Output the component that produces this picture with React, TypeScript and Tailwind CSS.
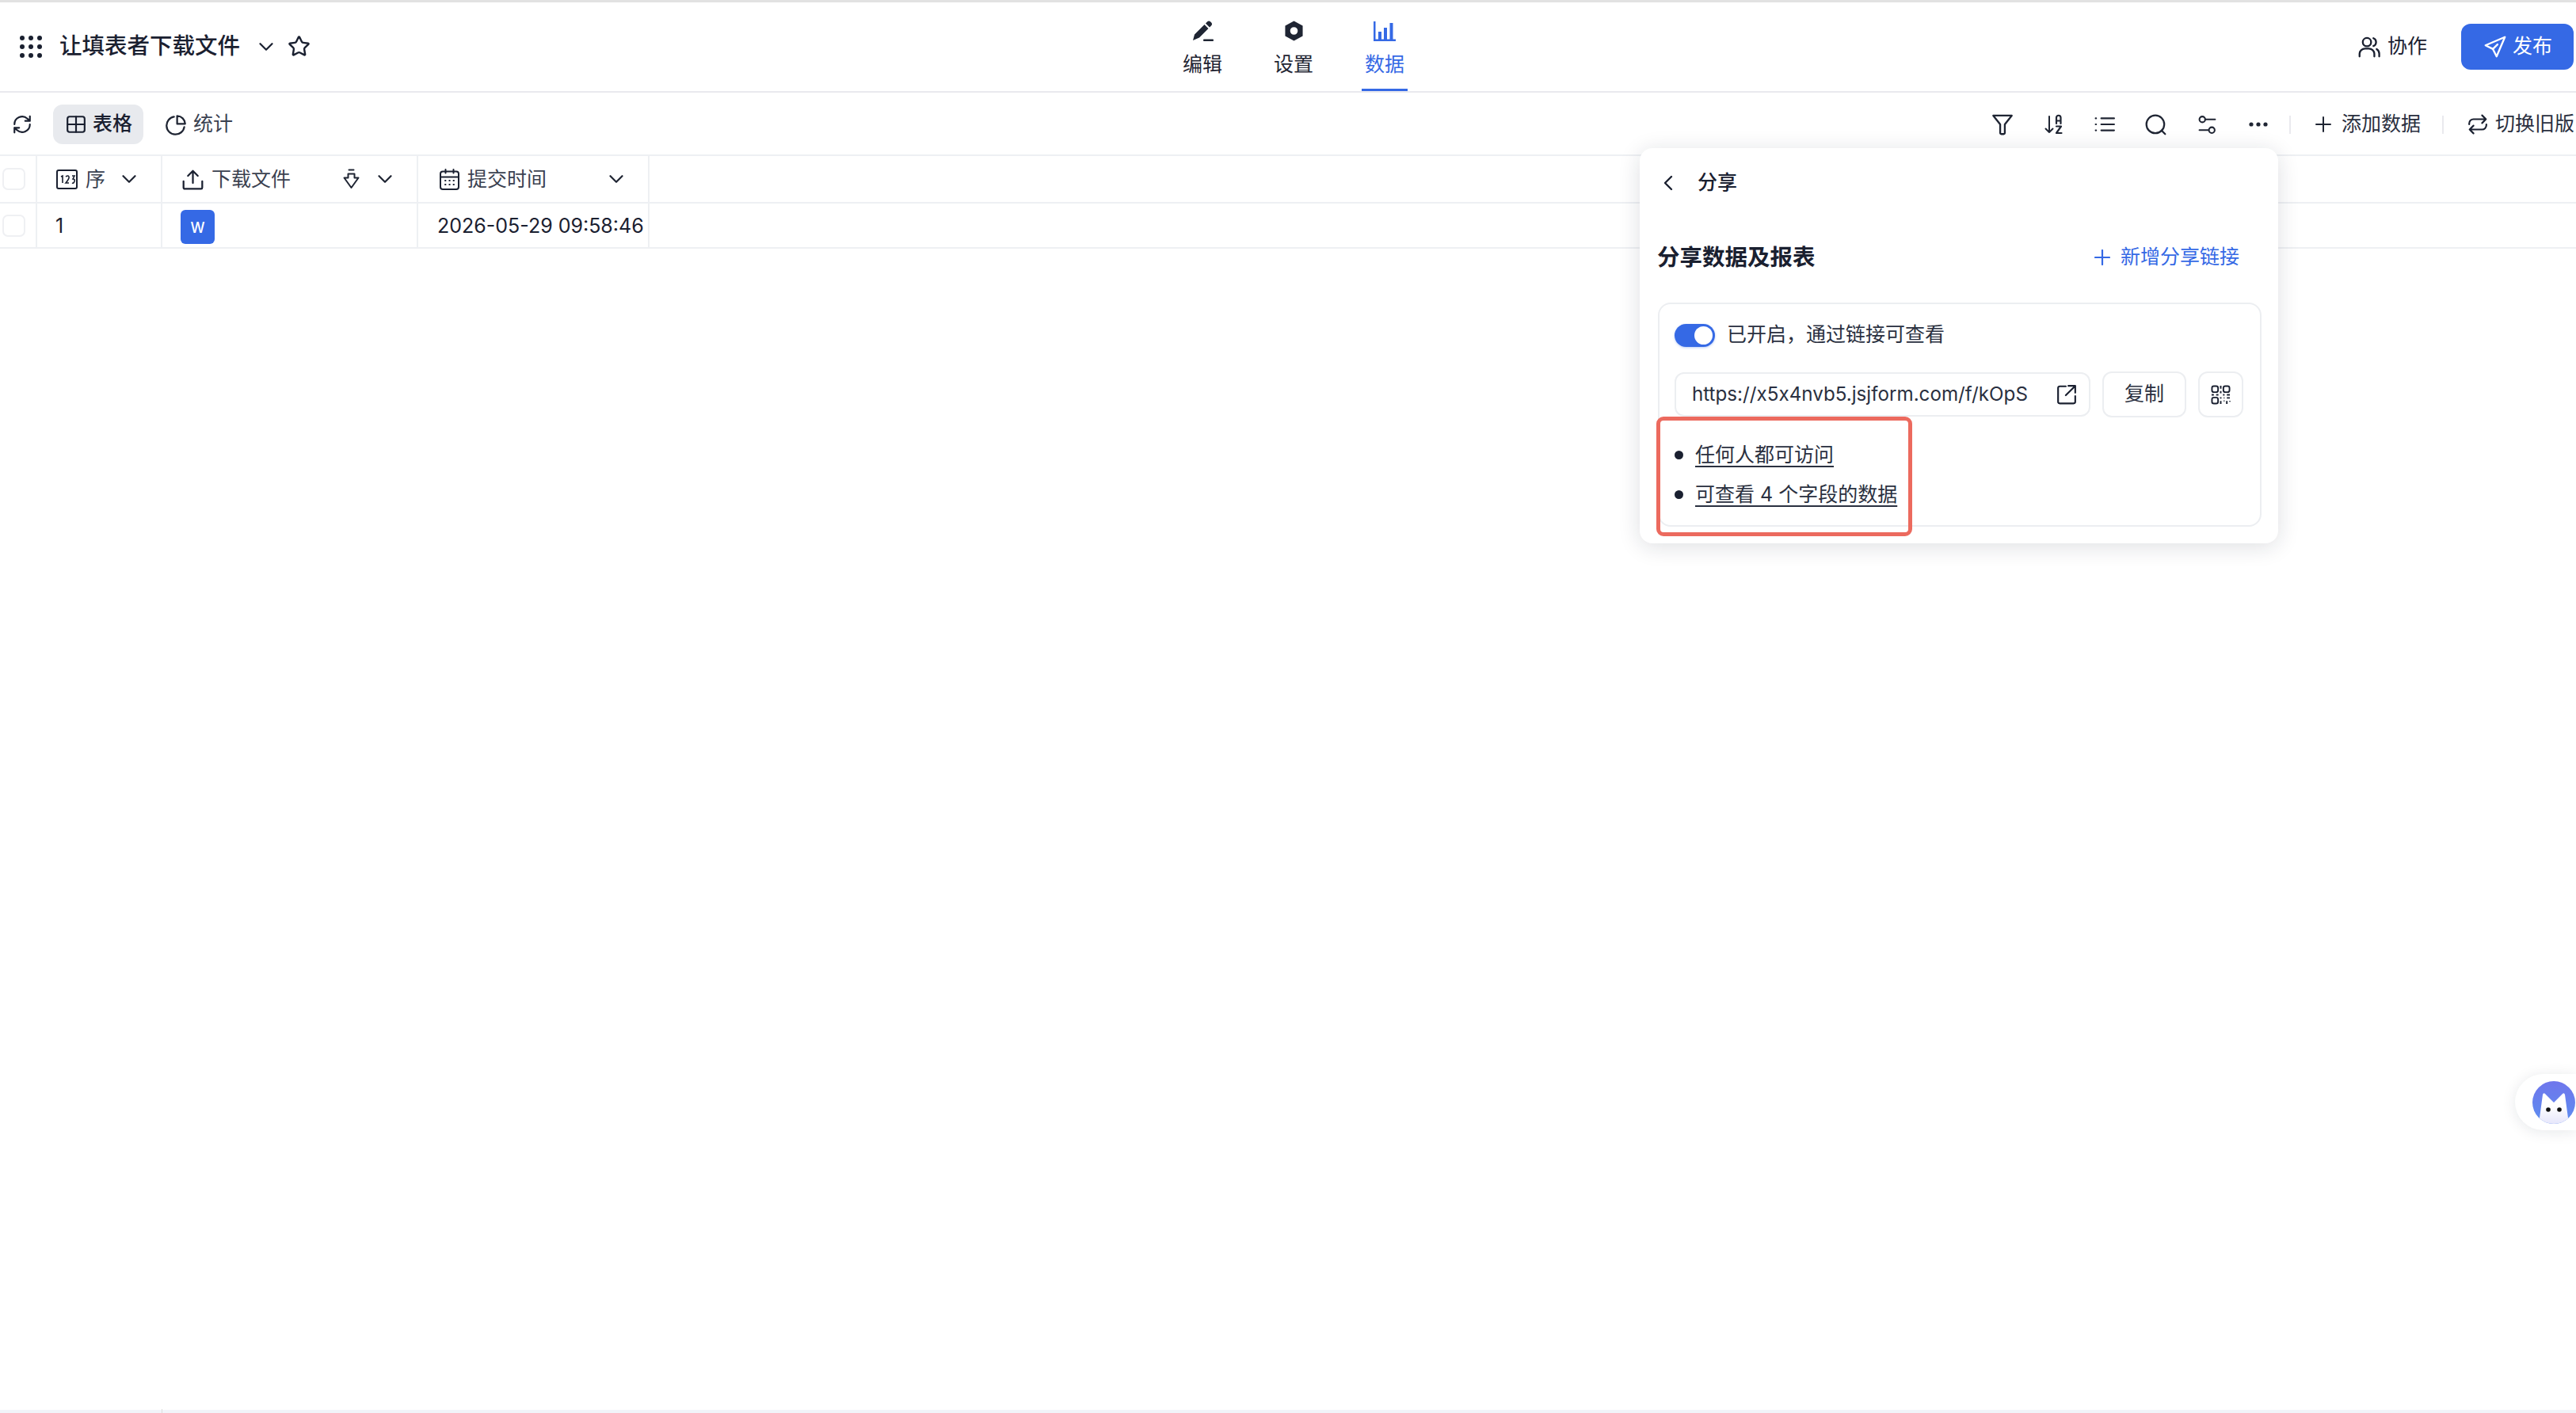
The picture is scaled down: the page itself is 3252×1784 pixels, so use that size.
import React from 'react'
import { Star } from 'lucide-react'

const stroke = { fill: 'none', stroke: 'currentColor', strokeWidth: 2, strokeLinecap: 'round', strokeLinejoin: 'round' } as const

const Ico = ({ className, children }: { className: string; children: React.ReactNode }) => (
  <svg viewBox="0 0 24 24" className={`shrink-0 ${className}`} {...stroke}>
    {children}
  </svg>
)

// 18px wide chevron, wider than the lucide one
const Chevron = ({ className }: { className: string }) => (
  <svg viewBox="0 0 18 10" className={`w-[18px] h-[10px] shrink-0 ${className}`} fill="none" stroke="currentColor" strokeWidth="2.200" strokeLinecap="round" strokeLinejoin="round">
    <path d="M1.500 1.200L9 8.800l7.500-7.600" />
  </svg>
)

const GridDots = () => (
  <svg viewBox="0 0 28 28" className="w-[28px] h-[28px] shrink-0" fill="currentColor">
    {[3, 14, 25].map((y) => [3, 14, 25].map((x) => <circle key={`${x}-${y}`} cx={x} cy={y} r="3" />))}
  </svg>
)

const NavItem = ({ label, active, icon }: { label: string; active?: boolean; icon: React.ReactNode }) => (
  <div className={`relative w-[58px] h-full flex flex-col items-center pt-[20px] ${active ? 'text-[#3569e5]' : 'text-[#1f2533]'}`}>
    <div className="h-[32px] flex items-center justify-center">{icon}</div>
    <span className="text-[25px] leading-[34px] mt-[9px] whitespace-nowrap">{label}</span>
    {active && <div className="absolute bottom-0 left-0 right-0 h-[3px] bg-[#3569e5]" />}
  </div>
)

const HeaderCell = ({ width, icon, label, extra }: { width: string; icon: React.ReactNode; label: string; extra?: React.ReactNode }) => (
  <div className={`${width} h-full border-r-2 border-[#eef0f3] flex items-center relative shrink-0`}>
    {icon}
    <span className="text-[25px] text-[#3a4150] ml-[10px] pt-[2px] whitespace-nowrap">{label}</span>
    {extra}
    <Chevron className="text-[#1f2533] ml-auto mr-[31px]" />
  </div>
)

const Check = () => <div className="w-[29px] h-[28px] rounded-[7px] border-2 border-[#eff0f3] ml-[3px] bg-white" />

const ToolIcon = ({ children }: { children: React.ReactNode }) => (
  <div className="w-[26px] h-[26px] flex items-center justify-center text-[#1f2533]">{children}</div>
)

export default function App() {
  return (
    <div className="relative w-full h-screen overflow-hidden bg-white flex flex-col text-[#1a2030] font-['Inter','Noto_Sans_CJK_SC',sans-serif]">
      <div className="h-[3px] bg-[#e2e2e2] shrink-0" />

      {/* top bar */}
      <header className="h-[114px] shrink-0 border-b-2 border-[#e9e9ee] flex items-stretch">
        <div className="w-[1489px] shrink-0 flex items-center pl-[25px] pb-[1px]">
          <GridDots />
          <span className="ml-[22px] text-[28.500px] font-medium whitespace-nowrap">让填表者下载文件</span>
          <Chevron className="ml-[24px]" />
          <Star className="ml-[18px] w-[29px] h-[29px]" strokeWidth={2} />
        </div>

        <nav className="flex gap-[57px] h-full">
          <NavItem
            label="编辑"
            icon={
              <svg viewBox="0 0 27 26" className="w-[27px] h-[26px]" fill="currentColor">
                <path d="M19 1.500a3 3 0 0 1 4.200 0l.8.8a3 3 0 0 1 0 4.200l-2 2-5-5zM15.500 5l5 5L9 21.500 1 25l2-7.500z" />
                <rect x="14" y="23.500" width="13" height="2.500" rx="1" />
              </svg>
            }
          />
          <NavItem
            label="设置"
            icon={
              <svg viewBox="0 0 26 27" className="w-[25px] h-[26px]" fill="currentColor" fillRule="evenodd">
                <path d="M13 .5l11.500 6.200v13.600L13 26.500 1.500 20.300V6.700zM13 8.500a5 5 0 1 0 0 10 5 5 0 0 0 0-10z" />
              </svg>
            }
          />
          <NavItem
            active
            label="数据"
            icon={
              <svg viewBox="0 0 28 25" className="w-[28px] h-[25px]" fill="currentColor">
                <rect x="0" y="0" width="2.500" height="25" />
                <rect x="0" y="22.500" width="28" height="2.500" />
                <rect x="6" y="13" width="4" height="10" />
                <rect x="13" y="8" width="4" height="15" />
                <rect x="20.500" y="2" width="4" height="21" />
              </svg>
            }
          />
        </nav>

        <div className="ml-auto flex items-center pr-[3px] pb-[1px]">
          <Ico className="w-[28px] h-[28px]">
            <circle cx="9.500" cy="7" r="4.500" />
            <path d="M1.500 22.500v-3a6 6 0 0 1 6-5.500h4a6 6 0 0 1 6 5.500v3" />
            <path d="M16.500 2.800a4.500 4.500 0 0 1 0 8.400M20 14.500a6 6 0 0 1 2.800 5v3" />
          </Ico>
          <span className="ml-[9px] text-[25px] whitespace-nowrap">协作</span>
          <button className="ml-[43px] w-[142px] h-[58px] rounded-[12px] bg-[#3569e5] text-white flex items-center pl-[29px]">
            <Ico className="w-[28px] h-[28px]">
              <path d="M22.500 1.500L1.500 10.500l8 4 4 8z" />
              <path d="M9.500 14.500l5-5" />
            </Ico>
            <span className="ml-[8px] text-[25px] whitespace-nowrap">发布</span>
          </button>
        </div>
      </header>

      {/* toolbar */}
      <div className="h-[80px] shrink-0 border-b-2 border-[#eef0f3] flex items-center">
        <div className="flex items-center pl-[15px] pt-[2px]">
          <Ico className="w-[26px] h-[26px]">
            <path d="M3 12a9 9 0 0 1 15-6.700L21 8M21 2.500V8h-5.500" />
            <path d="M21 12a9 9 0 0 1-15 6.700L3 16M3 21.500V16h5.500" />
          </Ico>
          <div className="ml-[26px] w-[114px] h-[50px] rounded-[12px] bg-[#e8eaee] flex items-center pl-[16px]">
            <Ico className="w-[26px] h-[26px]">
              <rect x="2" y="3" width="20" height="18" rx="2.500" />
              <path d="M2 12h20M12 3v18" />
            </Ico>
            <span className="ml-[8px] text-[25px] font-medium whitespace-nowrap">表格</span>
          </div>
          <div className="ml-[28px] flex items-center text-[#3a4150]">
            <Ico className="w-[27px] h-[27px] text-[#1f2533]">
              <path d="M9.500 3A10 10 0 1 0 21 14.500" />
              <path d="M13 2a9.500 9.500 0 0 1 9 9h-9z" />
            </Ico>
            <span className="ml-[8px] text-[25px] whitespace-nowrap">统计</span>
          </div>
        </div>

        <div className="ml-auto flex items-center pr-[2px] pt-[2px]">
          <div className="flex gap-[38.600px]">
            <ToolIcon>
              <Ico className="w-[28px] h-[28px]">
                <path d="M2 2.500h20l-7.500 9.500v9.500q-.2 1-1.200 1h-2.600q-1 0-1.200-1V12z" />
              </Ico>
            </ToolIcon>
            <ToolIcon>
              <svg viewBox="0 0 24 26" className="w-[24px] h-[26px]" fill="none" stroke="currentColor" strokeWidth="2" strokeLinecap="round" strokeLinejoin="round">
                <path d="M6 3v20M1.500 18.500L6 23l4.500-4.500" />
                <path d="M15 12V4.500a2.500 2.500 0 0 1 5.500 0V12M15 8.500h5.500M15 15.500h6l-6 8.500h6.500" strokeWidth="2.200" />
              </svg>
            </ToolIcon>
            <ToolIcon>
              <Ico className="w-[26px] h-[26px]">
                <path d="M8 5h15M8 12h15M8 19h15M1.500 5h.5M1.500 12h.5M1.500 19h.5" />
              </Ico>
            </ToolIcon>
            <ToolIcon>
              <Ico className="w-[27px] h-[27px]">
                <circle cx="11.500" cy="11.500" r="10" />
                <path d="M18.500 18.500l4 4" />
              </Ico>
            </ToolIcon>
            <ToolIcon>
              <Ico className="w-[25px] h-[25px]">
                <circle cx="6" cy="5.500" r="3.500" />
                <path d="M9.500 5.500h12M2.500 18.500h11" />
                <circle cx="17.500" cy="18.500" r="3.500" />
              </Ico>
            </ToolIcon>
            <ToolIcon>
              <svg viewBox="0 0 24 6" className="w-[24px] h-[6px]" fill="currentColor">
                <circle cx="3" cy="3" r="2.600" />
                <circle cx="12" cy="3" r="2.600" />
                <circle cx="21" cy="3" r="2.600" />
              </svg>
            </ToolIcon>
          </div>
          <div className="ml-[26px] w-[2px] h-[23px] bg-[#e9e9ee]" />
          <svg viewBox="0 0 20 20" className="ml-[31px] w-[20px] h-[20px] text-[#1f2533] shrink-0" fill="none" stroke="currentColor" strokeWidth="2" strokeLinecap="round">
            <path d="M10 1v18M1 10h18" />
          </svg>
          <span className="ml-[13px] text-[25px] whitespace-nowrap text-[#2a3040]">添加数据</span>
          <div className="ml-[27px] w-[2px] h-[23px] bg-[#e9e9ee]" />
          <Ico className="ml-[30px] w-[26px] h-[28px]">
            <path d="M17 1.500l4.500 4.500L17 10.500M21.500 6H7a5 5 0 0 0-5 5v1" />
            <path d="M7 22.500L2.500 18 7 13.500M2.500 18H17a5 5 0 0 0 5-5v-1" />
          </Ico>
          <span className="ml-[9px] text-[25px] whitespace-nowrap text-[#2a3040]">切换旧版</span>
        </div>
      </div>

      {/* table head */}
      <div className="h-[60px] shrink-0 border-b-2 border-[#eef0f3] flex items-center">
        <div className="w-[47px] h-full border-r-2 border-[#eef0f3] flex items-center shrink-0">
          <Check />
        </div>
        <HeaderCell
          width="w-[158px] pl-[24px]"
          label="序"
          icon={
            <svg viewBox="0 0 27 25" className="w-[27px] h-[25px] shrink-0" fill="none" stroke="currentColor" strokeWidth="2">
              <rect x="1" y="1" width="25" height="23" rx="2" />
              <path d="M6 9l2-1v9M12 9q3-2 4 0t-4 8h4M20 8h3l-2 4q3 0 2 3t-3 2" strokeWidth="1.600" />
            </svg>
          }
        />
        <HeaderCell
          width="w-[323px] pl-[25px]"
          label="下载文件"
          icon={
            <Ico className="w-[27px] h-[27px]">
              <path d="M12 16V2.500M6.500 8L12 2.500 17.500 8M1.500 14v7a1.500 1.500 0 0 0 1.500 1.500h18a1.500 1.500 0 0 0 1.500-1.500v-7" />
            </Ico>
          }
          extra={
            <svg viewBox="0 0 21 26" className="w-[21px] h-[26px] shrink-0 ml-[66px] text-[#1f2533]" fill="none" stroke="currentColor" strokeWidth="2" strokeLinejoin="round" strokeLinecap="round">
              <path d="M7.500 1.500h6M6.500 6.500h8v5h5L10.500 24 1.500 11.500h5z" />
            </svg>
          }
        />
        <HeaderCell
          width="w-[292px] pl-[27px]"
          label="提交时间"
          icon={
            <svg viewBox="0 0 25 27" className="w-[25px] h-[27px] shrink-0" fill="none" stroke="currentColor" strokeWidth="2" strokeLinecap="round">
              <rect x="1" y="3.500" width="23" height="22.500" rx="3" />
              <path d="M1 10.500h23M7.500 1v4.500M17.500 1v4.500" />
              <path d="M7 15h.5M12.300 15h.5M17.500 15h.5M7 20h.5M12.300 20h.5M17.500 20h.5" strokeWidth="2" />
            </svg>
          }
        />
      </div>

      {/* table row */}
      <div className="h-[57px] shrink-0 border-b-2 border-[#eef0f3] flex items-center">
        <div className="w-[47px] h-full border-r-2 border-[#eef0f3] flex items-center shrink-0">
          <Check />
        </div>
        <div className="w-[158px] h-full border-r-2 border-[#eef0f3] flex items-center pl-[23px] pt-[2px] shrink-0 text-[25px]">1</div>
        <div className="w-[323px] h-full border-r-2 border-[#eef0f3] flex items-center pl-[23px] pt-[3px] shrink-0">
          <div className="w-[43px] h-[43px] rounded-[6px] bg-[#3569e5] text-white flex items-center justify-center text-[18px] font-medium pt-[2px]">W</div>
        </div>
        <div className="w-[292px] h-full border-r-2 border-[#eef0f3] flex items-center pl-[24px] pt-[2px] shrink-0 text-[25px] whitespace-nowrap">2026-05-29 09:58:46</div>
      </div>

      <div className="flex-1" />

      {/* bottom strip */}
      <div className="h-[4px] shrink-0 bg-[#f1f4f9] relative">
        <div className="absolute left-[204px] -top-[1px] w-[1px] h-[5px] bg-[#dcdcdc]" />
      </div>

      {/* share popover */}
      <div className="absolute left-[2070px] top-[187px] w-[806px] h-[499px] rounded-[16px] bg-white shadow-[0_4px_28px_rgba(20,30,50,0.14)] pt-[24px] px-[23px]">
        <div className="h-[40px] flex items-center">
          <svg viewBox="0 0 14 20" className="ml-[6px] w-[14px] h-[20px] shrink-0" fill="none" stroke="currentColor" strokeWidth="2.400" strokeLinecap="round" strokeLinejoin="round">
            <path d="M11 2L3 10l8 8" />
          </svg>
          <span className="ml-[30px] text-[25px] font-medium whitespace-nowrap">分享</span>
        </div>
        <div className="mt-[54px] h-[40px] flex items-center">
          <span className="ml-[-1px] text-[28.500px] font-semibold whitespace-nowrap">分享数据及报表</span>
          <svg viewBox="0 0 20 20" className="ml-auto w-[20px] h-[20px] text-[#3569e5] shrink-0" fill="none" stroke="currentColor" strokeWidth="2.200" strokeLinecap="round">
            <path d="M10 1v18M1 10h18" />
          </svg>
          <span className="ml-[13px] mr-[26px] text-[25px] text-[#3569e5] whitespace-nowrap">新增分享链接</span>
        </div>

        <div className="mt-[37px] h-[283px] w-[762px] rounded-[16px] border-2 border-[#eceef1] pt-[24px] px-[19px]">
          <div className="flex items-center h-[30px]">
            <div className="w-[51px] h-[29px] rounded-full bg-[#3569e5] relative shrink-0 shadow-[0_1px_3px_rgba(53,105,229,0.35)]">
              <div className="absolute right-[3px] top-[3px] w-[23px] h-[23px] rounded-full bg-white" />
            </div>
            <span className="ml-[15px] text-[25px] whitespace-nowrap text-[#2a3040]">已开启，通过链接可查看</span>
          </div>
          <div className="mt-[31px] flex items-center">
            <div className="w-[525px] h-[56px] rounded-[12px] border-2 border-[#eceef1] flex items-center pl-[20px] shrink-0">
              <span className="text-[24.200px] whitespace-nowrap text-[#2a3040] [font-feature-settings:'calt'_0]">https://x5x4nvb5.jsjform.com/f/kOpS</span>
              <Ico className="ml-auto mr-[15px] w-[26px] h-[26px]">
                <path d="M11 2.500H4A2 2 0 0 0 2 4.500v16a2 2 0 0 0 2 2h16a2 2 0 0 0 2-2V14M14 2h8v8M22 2L11 13" />
              </Ico>
            </div>
            <button className="ml-[15px] w-[106px] h-[58px] rounded-[12px] border-2 border-[#eceef1] text-[25px] text-[#2a3040] shrink-0">复制</button>
            <button className="ml-[15px] w-[57px] h-[58px] rounded-[12px] border-2 border-[#eceef1] flex items-center justify-center shrink-0">
              <svg viewBox="0 0 26 26" className="w-[25px] h-[25px]" fill="none" stroke="currentColor" strokeWidth="2">
                <rect x="1.500" y="1.500" width="8" height="8" rx="2.500" />
                <rect x="16.500" y="1.500" width="8" height="8" rx="2.500" />
                <rect x="1.500" y="16.500" width="8" height="8" rx="2.500" />
                <path d="M13 1v4M13 8v3M1 13h3M7 13h3M16 13h2M21 13h4M13 16v2M13 21v4M17 17h1M21 17h4M17 21h1M21 21v4M25 21v1" />
              </svg>
            </button>
          </div>
          <ul className="mt-[30px] flex flex-col gap-[15px]">
            <li className="flex items-center h-[35px]">
              <span className="w-[11px] h-[11px] rounded-full bg-[#1a2030] shrink-0" />
              <span className="ml-[15px] text-[25px] underline underline-offset-[5px] decoration-2 whitespace-nowrap text-[#2a3040]">任何人都可访问</span>
            </li>
            <li className="flex items-center h-[35px]">
              <span className="w-[11px] h-[11px] rounded-full bg-[#1a2030] shrink-0" />
              <span className="ml-[15px] text-[25px] underline underline-offset-[5px] decoration-2 whitespace-nowrap text-[#2a3040]">可查看 4 个字段的数据</span>
            </li>
          </ul>
        </div>

        {/* annotation box */}
        <div className="absolute left-[21px] top-[339px] w-[323px] h-[151px] rounded-[9px] border-[5px] border-[#ec6a5e]" />
      </div>

      {/* floating assistant */}
      <div className="absolute right-0 top-[1356px] w-[77px] h-[71px] rounded-l-full bg-white shadow-[0_2px_18px_rgba(20,30,50,0.10)] flex items-center pl-[22px]">
        <svg viewBox="0 0 54 54" className="w-[54px] h-[54px] shrink-0">
          <defs>
            <linearGradient id="catBg" x1="0" y1="0" x2="0" y2="1">
              <stop offset="0%" stopColor="#6f76ec" />
              <stop offset="100%" stopColor="#5c8ef0" />
            </linearGradient>
            <linearGradient id="catFace" x1="0" y1="0" x2="0" y2="1">
              <stop offset="40%" stopColor="#ffffff" />
              <stop offset="100%" stopColor="#e6e6fb" />
            </linearGradient>
            <clipPath id="catClip">
              <circle cx="27" cy="27" r="27" />
            </clipPath>
          </defs>
          <g clipPath="url(#catClip)">
            <rect width="54" height="54" fill="url(#catBg)" />
            <path d="M8 54L13 17q1-3 3-1l11 11 11-11q2-2 3 1l5 37z" fill="url(#catFace)" />
            <circle cx="20" cy="36" r="2.800" fill="#111" />
            <circle cx="34" cy="36" r="2.800" fill="#111" />
          </g>
        </svg>
      </div>
    </div>
  )
}
